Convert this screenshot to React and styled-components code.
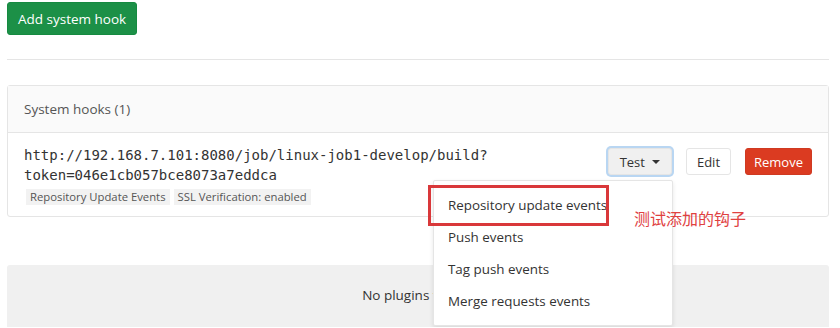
import React from "react"
import styled, { createGlobalStyle } from "styled-components"

const Global = createGlobalStyle`
body {
  margin: 0;
  background: #fff;
  font-family: "Open Sans", "Noto Sans", sans-serif;
  color: #333;
}
`

const Page = styled.div`
padding: 2px 11px 0 7px;
`

const AddButton = styled.button`
height: 33px;
padding: 0 10px;
border: 1px solid #168a41;
border-radius: 3px;
background-color: #1c9047;
color: white;
font-family: inherit;
font-size: 13.5px;
cursor: pointer;
`

const Divider = styled.hr`
margin: 24px 0 25px;
border: none;
border-top: 1px solid #e5e5e5;
`

const Card = styled.section`
border: 1px solid #e5e5e5;
border-radius: 3px;
`

const CardHeader = styled.div`
height: 46px;
display: flex;
align-items: center;
padding: 0 16px;
background-color: #fafafa;
border-bottom: 1px solid #e5e5e5;
font-size: 13.5px;
color: #555;
`

const HookRow = styled.div`
display: flex;
align-items: flex-start;
padding: 12px 16px 11px;
`

const HookInfo = styled.div`
flex: 1;
`

const Url = styled.div`
font-family: "DejaVu Sans Mono", monospace;
font-size: 14px;
line-height: 20px;
color: #333;
`

const Badges = styled.div`
display: flex;
margin-top: 4px;
padding-left: 2px;
`

const Badge = styled.span`
height: 16px;
line-height: 16px;
padding: 0 4px;
margin-right: 4px;
background-color: #f2f2f2;
font-size: 11.3px;
color: #555;
`

const Actions = styled.div`
display: flex;
align-items: center;
gap: 14px;
margin-top: 3px;
`

const Dropdown = styled.div`
position: relative;
`

const Button = styled.button`
height: 27px;
padding: 0 ${p => (p.$pad ? p.$pad : 10)}px;
border-radius: 3px;
border: 1px solid ${p => (p.$danger ? "#cf3a22" : "#e5e5e5")};
background-color: ${p => (p.$danger ? "#db3b21" : p.$active ? "#f0f0f0" : "#fff")};
color: ${p => (p.$danger ? "#fff" : "#333")};
box-shadow: ${p => (p.$active ? "0 0 0 2px #b9d6f2" : "none")};
font-family: inherit;
font-size: 13px;
display: flex;
align-items: center;
gap: 7px;
cursor: pointer;
`

const Caret = styled.span`
width: 0;
height: 0;
border-left: 4px solid transparent;
border-right: 4px solid transparent;
border-top: 4px solid #333;
`

const Menu = styled.ul`
position: absolute;
top: 32px;
right: -1px;
width: 238px;
margin: 0;
padding: 8px 0;
list-style: none;
background: #fff;
border: 1px solid #e5e5e5;
border-radius: 2px;
box-shadow: 0 2px 4px rgba(0, 0, 0, 0.1);
z-index: 2;
`

const MenuItem = styled.li`
height: 32px;
line-height: 32px;
padding: 0 14px;
font-size: 13.4px;
color: #333;
white-space: nowrap;
`

const Highlight = styled.div`
position: absolute;
left: -6px;
top: 4px;
width: 175px;
height: 35px;
border: 3px solid #d9383a;
`

const Note = styled.div`
position: absolute;
left: 200px;
top: 25px;
font-family: "Noto Sans CJK SC", sans-serif;
font-size: 16px;
color: #e0413f;
white-space: nowrap;
`

const Empty = styled.div`
margin-top: 48px;
height: 62px;
padding-top: 21px;
box-sizing: border-box;
text-align: center;
background-color: #f0f0f0;
border-radius: 3px 3px 0 0;
font-size: 13.5px;
color: #333;
`

export default function App() {
  const events = [
    "Repository update events",
    "Push events",
    "Tag push events",
    "Merge requests events",
  ]
  return (
    <Page>
      <Global />
      <AddButton>Add system hook</AddButton>
      <Divider />
      <Card>
        <CardHeader>System hooks (1)</CardHeader>
        <HookRow>
          <HookInfo>
            <Url>http://192.168.7.101:8080/job/linux-job1-develop/build?</Url>
            <Url>token=046e1cb057bce8073a7eddca</Url>
            <Badges>
              <Badge>Repository Update Events</Badge>
              <Badge>SSL Verification: enabled</Badge>
            </Badges>
          </HookInfo>
          <Actions>
            <Dropdown>
              <Button $active $pad={11}>
                Test <Caret />
              </Button>
              <Menu>
                {events.map(e => (
                  <MenuItem key={e}>{e}</MenuItem>
                ))}
                <Highlight />
                <Note>测试添加的钩子</Note>
              </Menu>
            </Dropdown>
            <Button $pad={10}>Edit</Button>
            <Button $danger $pad={8}>Remove</Button>
          </Actions>
        </HookRow>
      </Card>
      <Empty>No plugins found.</Empty>
    </Page>
  )
}
